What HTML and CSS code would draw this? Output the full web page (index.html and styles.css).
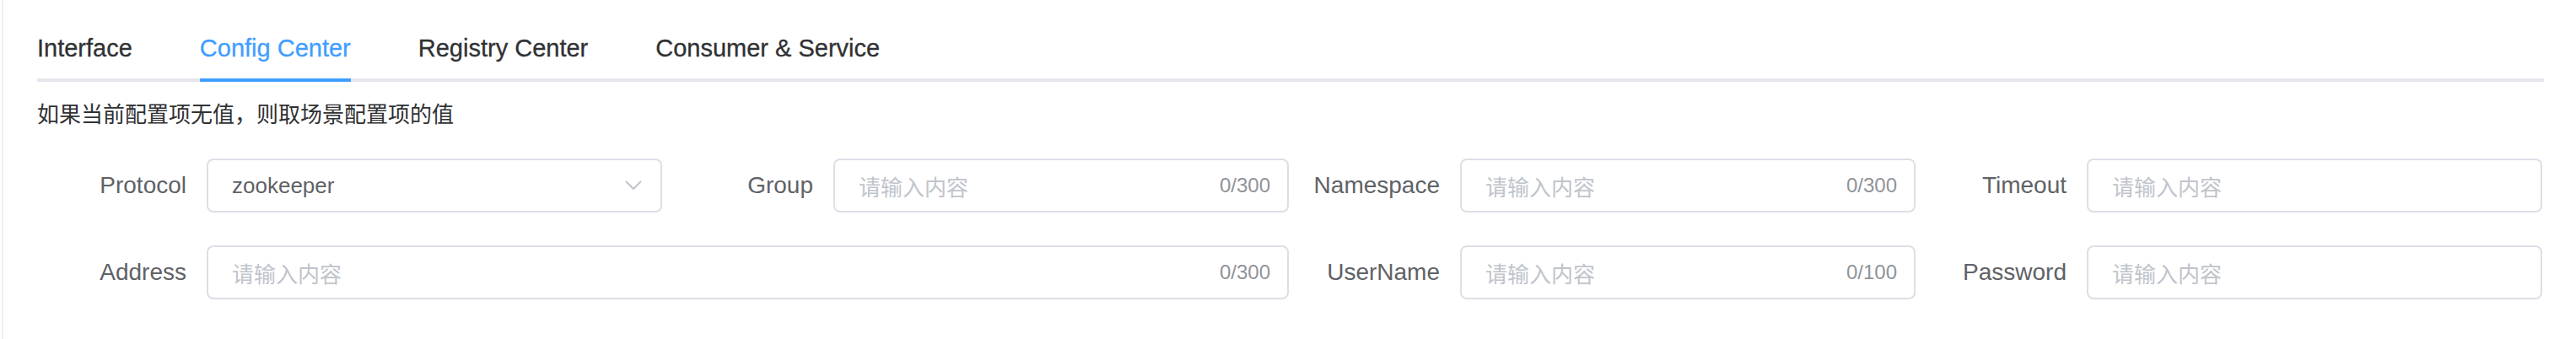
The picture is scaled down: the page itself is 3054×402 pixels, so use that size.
FILE: index.html
```html
<!DOCTYPE html>
<html lang="zh-CN">
<head>
<meta charset="utf-8">
<title>Config Center</title>
<link rel="stylesheet" href="styles.css">
</head>
<body>
<div class="card">
  <div class="tabs-header">
    <div class="tab">Interface</div>
    <div class="tab active">Config Center</div>
    <div class="tab">Registry Center</div>
    <div class="tab">Consumer &amp; Service</div>
  </div>
  <div class="tabs-content">
    <div class="tip">如果当前配置项无值，则取场景配置项的值</div>
    <div class="form">
      <div class="item">
        <label class="label">Protocol</label>
        <div class="input select">
          <span class="value">zookeeper</span>
          <svg class="arrow" width="20" height="12" viewBox="0 0 20 12"><polyline points="1,1 10,10 19,1" fill="none" stroke="#c0c4cc" stroke-width="2"/></svg>
        </div>
      </div>
      <div class="item">
        <label class="label">Group</label>
        <div class="input"><span class="ph">请输入内容</span><span class="count">0/300</span></div>
      </div>
      <div class="item">
        <label class="label">Namespace</label>
        <div class="input"><span class="ph">请输入内容</span><span class="count">0/300</span></div>
      </div>
      <div class="item">
        <label class="label">Timeout</label>
        <div class="input"><span class="ph">请输入内容</span></div>
      </div>
      <div class="item span2">
        <label class="label">Address</label>
        <div class="input"><span class="ph">请输入内容</span><span class="count">0/300</span></div>
      </div>
      <div class="item">
        <label class="label">UserName</label>
        <div class="input"><span class="ph">请输入内容</span><span class="count">0/100</span></div>
      </div>
      <div class="item">
        <label class="label">Password</label>
        <div class="input"><span class="ph">请输入内容</span></div>
      </div>
    </div>
  </div>
</div>
</body>
</html>
```

FILE: styles.css
```css
html, body {
  margin: 0;
  padding: 0;
  background: #ffffff;
  overflow: hidden;
}
body {
  font-family: "Liberation Sans", "Noto Sans CJK SC", sans-serif;
  color: #303133;
}
.card {
  margin-left: 2px;
  border-left: 2px solid #ebeef5;
  padding: 17px 38px 0 40px;
  height: 385px;
}
.tabs-header {
  position: relative;
  display: flex;
  height: 80px;
}
.tabs-header::after {
  content: "";
  position: absolute;
  left: 0;
  right: 0;
  bottom: 0;
  height: 4px;
  background: #e4e7ed;
}
.tab {
  position: relative;
  padding: 0 40px;
  line-height: 80px;
  font-size: 29px;
  color: #303133;
  white-space: nowrap;
  -webkit-text-stroke: 0.3px currentColor;
}
.tab:first-child {
  padding-left: 0;
}
.tab.active {
  color: #409eff;
}
.tab.active::after {
  content: "";
  position: absolute;
  left: 40px;
  right: 40px;
  bottom: 0;
  height: 4px;
  background: #409eff;
  z-index: 1;
}
.tabs-content {
  padding-top: 23px;
}
.tip {
  font-size: 26px;
  line-height: 32px;
  color: #303133;
  margin-bottom: 36px;
}
.form {
  display: grid;
  grid-template-columns: repeat(4, 743px);
  row-gap: 39px;
}
.item {
  display: flex;
  align-items: center;
  height: 64px;
  margin-right: 2px;
}
.item.span2 {
  grid-column: span 2;
}
.label {
  width: 201px;
  flex: none;
  box-sizing: border-box;
  padding-right: 24px;
  text-align: right;
  font-size: 28px;
  line-height: 64px;
  color: #606266;
  white-space: nowrap;
}
.input {
  flex: 1;
  height: 64px;
  box-sizing: border-box;
  border: 2px solid #dcdfe6;
  border-radius: 8px;
  padding: 0 20px 0 28px;
  display: flex;
  align-items: center;
  justify-content: space-between;
  font-size: 26px;
}
.ph {
  color: #c0c4cc;
}
.value {
  color: #606266;
}
.count {
  font-size: 24px;
  color: #909399;
}
.select {
  padding-right: 22px;
}
.arrow {
  display: block;
}
```
